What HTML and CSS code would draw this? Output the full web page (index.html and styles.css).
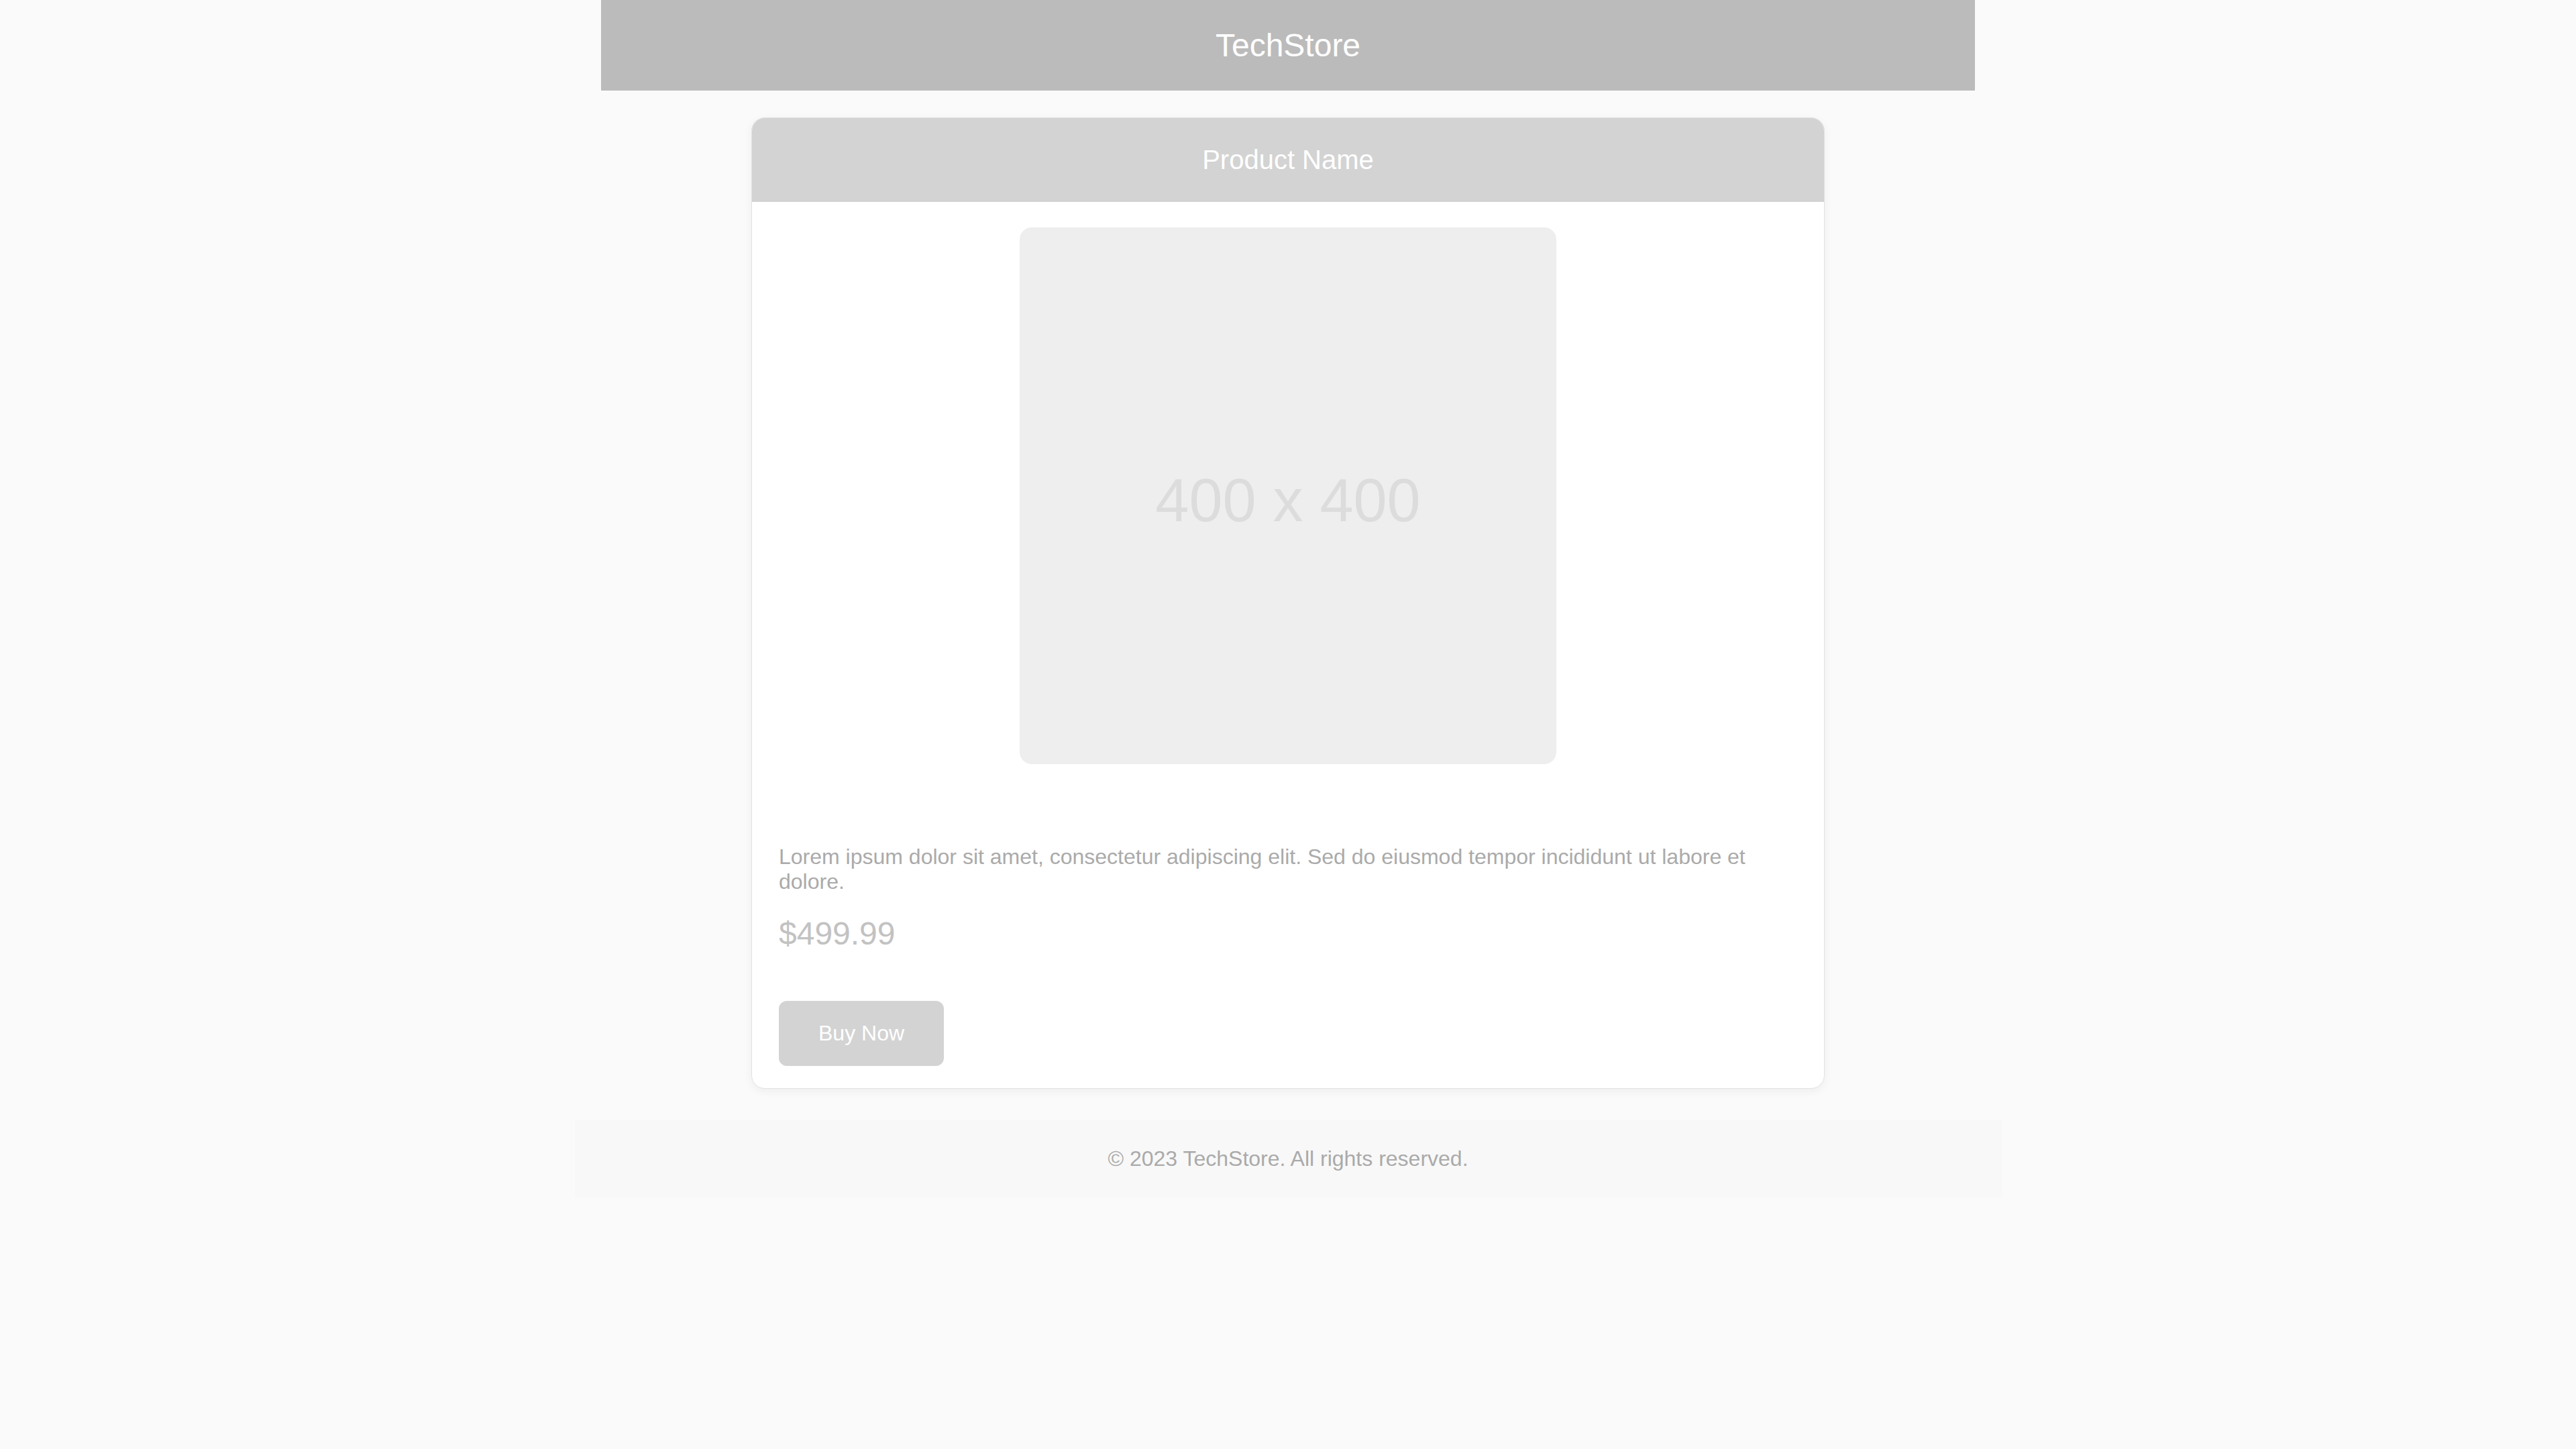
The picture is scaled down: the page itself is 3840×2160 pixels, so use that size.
FILE: index.html
```html
<!DOCTYPE html>
<html lang="en">

<head>
    <meta charset="UTF-8">
    <meta name="viewport" content="width=device-width, initial-scale=1.0">
    <title>TechStore</title>
    <link rel="stylesheet" href="styles.css">
</head>

<body>
    <!-- ヘッダー -->
    <header class="site-header">TechStore</header>

    <div class="product-card">
        <div class="card-title">Product Name</div>
        <div class="card-body">
            <div class="product-image">400 x 400</div>
            <p class="description">Lorem ipsum dolor sit amet, consectetur adipiscing elit. Sed do eiusmod tempor incididunt ut labore et dolore.</p>
            <p class="price">$499.99</p>
            <button class="buy-button">Buy Now</button>
        </div>
    </div>

    <footer class="site-footer">&copy; 2023 TechStore. All rights reserved.</footer>
</body>

</html>
```

FILE: styles.css
```css
body {
    font-family: "Liberation Sans", Arial, sans-serif;
    margin: 0;
    background-color: #fafafa;
    color: #aaaaaa;
}

.site-header {
    width: 2048px;
    height: 135px;
    margin: 0 auto;
    background-color: #bbbbbb;
    color: #ffffff;
    font-size: 48px;
    display: flex;
    align-items: center;
    justify-content: center;
}

.product-card {
    width: 1600px;
    margin: 40px auto 0;
    background-color: #ffffff;
    border: 1px solid #e2e2e2;
    border-radius: 20px;
    box-sizing: border-box;
    box-shadow: 0 4px 14px rgba(0, 0, 0, 0.05);
    overflow: hidden;
}

.card-title {
    height: 125px;
    background-color: #d3d3d3;
    color: #ffffff;
    font-size: 40px;
    display: flex;
    align-items: center;
    justify-content: center;
}

.card-body {
    padding: 38px 40px 33px;
}

/* 画像の代わりのプレースホルダー */
.product-image {
    width: 800px;
    height: 800px;
    box-sizing: border-box;
    padding-top: 14px;
    margin: 0 auto 120px;
    background-color: #eeeeee;
    border-radius: 18px;
    color: #dcdcdc;
    font-size: 90px;
    display: flex;
    align-items: center;
    justify-content: center;
}

.description {
    margin: 0 0 31px;
    font-size: 32px;
    color: #aaaaaa;
}

.price {
    margin: 0 0 73px;
    font-size: 48px;
    color: #c2c2c2;
}

.buy-button {
    font-family: inherit;
    font-size: 32px;
    padding: 30px 59px;
    background-color: #d3d3d3;
    color: #ffffff;
    border: none;
    border-radius: 12px;
    cursor: pointer;
}

.site-footer {
    width: 2127px;
    height: 116px;
    margin: 46px auto 0;
    background-color: #f8f8f8;
    color: #aaaaaa;
    font-size: 32px;
    display: flex;
    align-items: center;
    justify-content: center;
}
```
